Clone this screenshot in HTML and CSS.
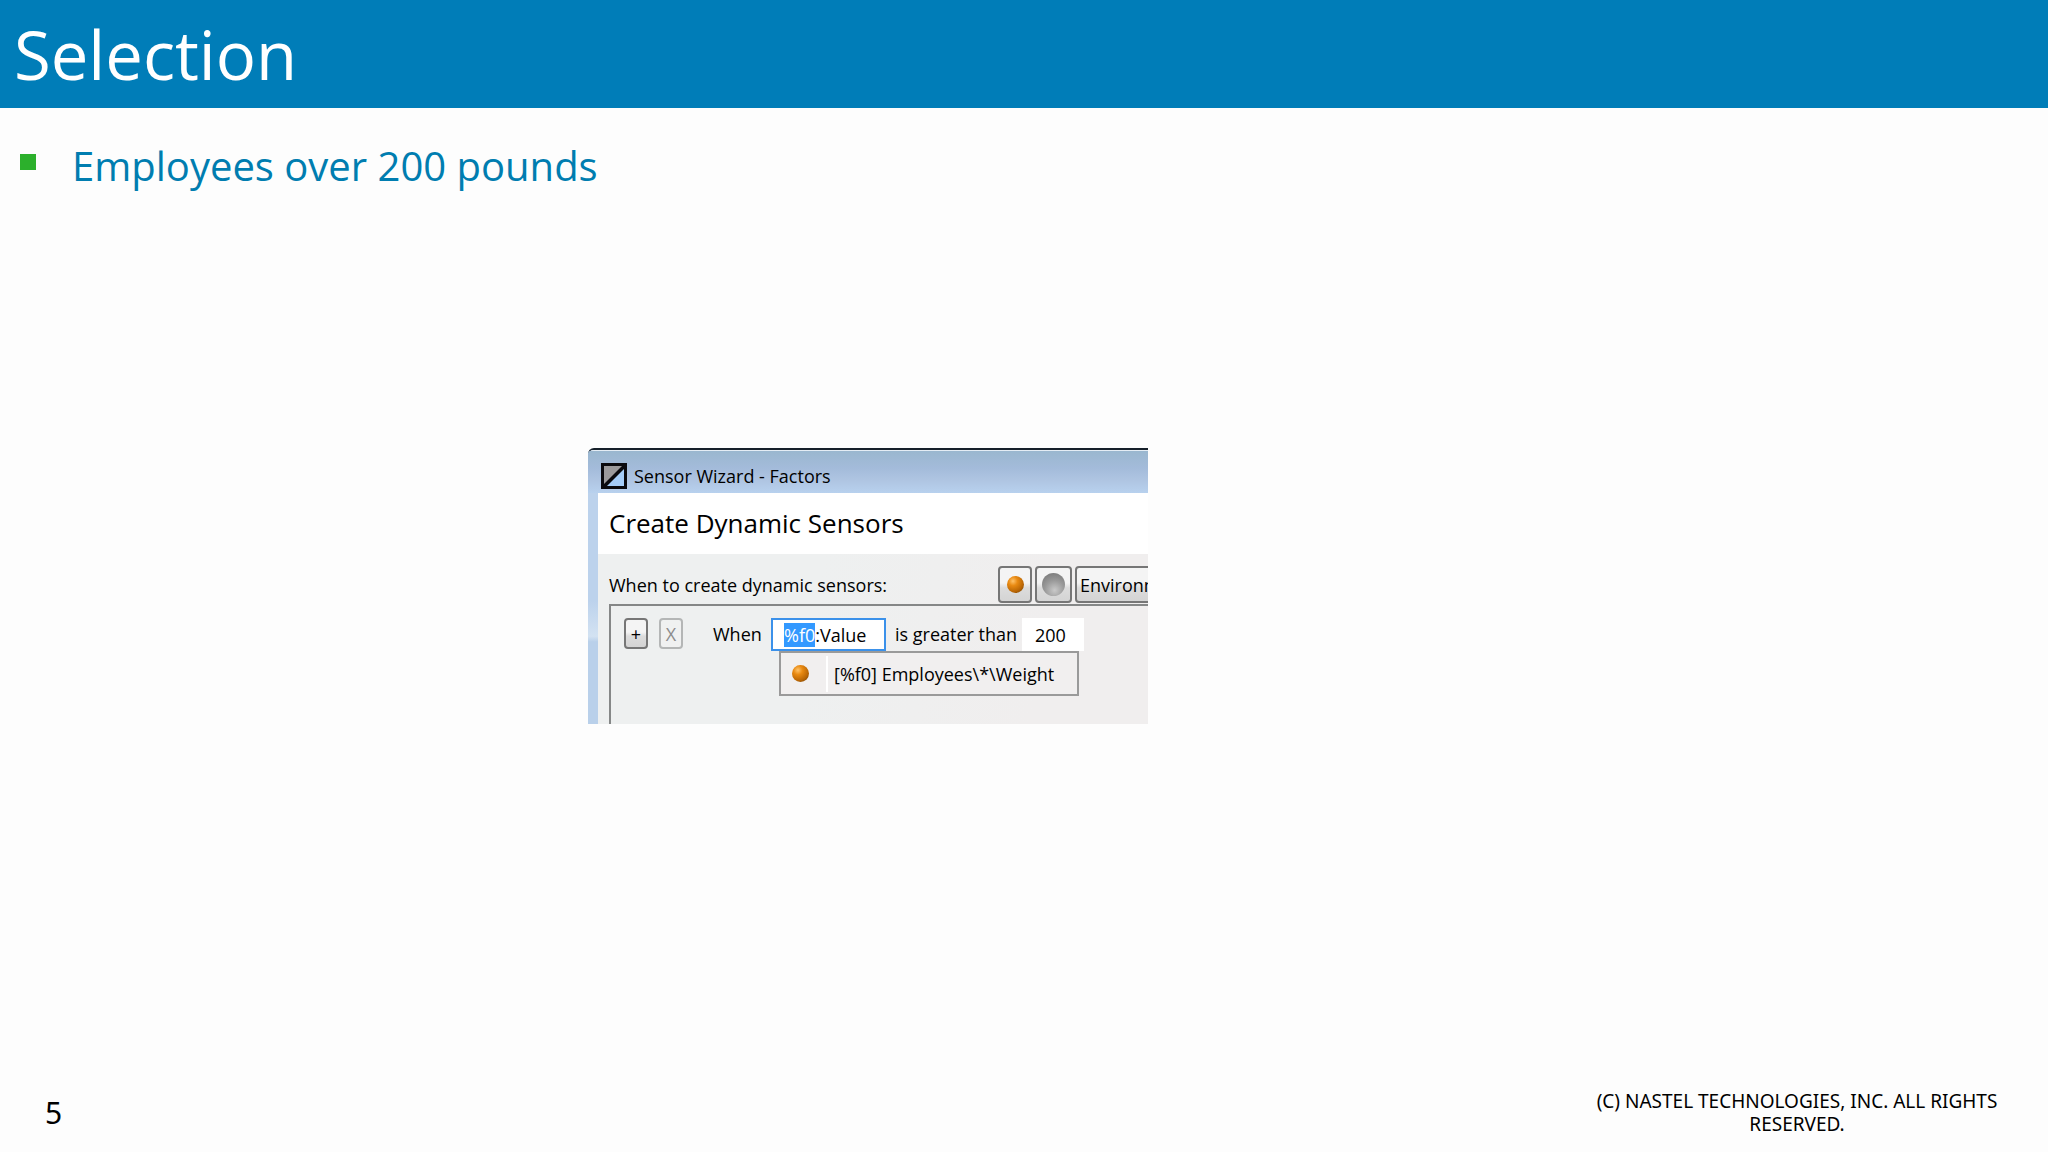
FILE: index.html
```html
<!DOCTYPE html>
<html lang="en">
<head>
    <meta charset="utf-8">
    <title>Selection</title>
    <link rel="stylesheet" href="styles.css">
</head>
<body>
    <header class="slide-header">
        <h1>Selection</h1>
    </header>

    <main class="slide-body">
        <ul class="bullets">
            <li>Employees over 200 pounds</li>
        </ul>

        <div class="wizard">
            <div class="titlebar">
                <svg class="app-icon" width="26" height="26" viewBox="0 0 26 26">
                    <rect width="26" height="26" fill="#0a0a0e"/>
                    <path d="M3 3H21L3 21Z" fill="#9b9a9c"/>
                    <path d="M23 6V23H6Z" fill="#a5cdf8"/>
                </svg>
                <span>Sensor Wizard - Factors</span>
            </div>
            <div class="wizard-content">
                <h2>Create Dynamic Sensors</h2>
                <div class="toolbar">
                    <span class="toolbar-label">When to create dynamic sensors:</span>
                    <button class="tool" type="button" aria-label="Sensor"><span class="ball orange"></span></button>
                    <button class="tool wide" type="button" aria-label="Inactive sensor"><span class="ball gray"></span></button>
                    <button class="tool text" type="button">Environment</button>
                </div>
                <div class="conditions">
                    <button class="small" type="button">+</button>
                    <button class="small" type="button" disabled>X</button>
                    <label class="when" for="factor">When</label>
                    <div class="factor">
                        <input class="factor-input" id="factor" type="text" value="%f0:Value">
                        <div class="suggestions">
                            <button class="suggestion" type="button">
                                <span class="ball orange"></span>
                                <span class="suggestion-text">[%f0] Employees\*\Weight</span>
                            </button>
                        </div>
                    </div>
                    <label class="operator" for="limit">is greater than</label>
                    <input class="limit-input" id="limit" type="text" value="200">
                </div>
            </div>
        </div>
    </main>

    <footer class="slide-footer">
        <span class="page-number">5</span>
        <p class="copyright">(C) NASTEL TECHNOLOGIES, INC. ALL RIGHTS RESERVED.</p>
    </footer>

    <script>
        // the factor part of the expression starts out selected
        const factor = document.getElementById('factor');
        factor.focus();
        factor.setSelectionRange(0, 3);
    </script>
</body>
</html>
```
FILE: styles.css
```css
* {
    box-sizing: border-box;
}

body {
    margin: 0;
    min-height: 100vh;
    display: flex;
    flex-direction: column;
    background: #fdfdfd;
    color: #000;
    font-family: "Noto Sans", "Open Sans", sans-serif;
}

.slide-header {
    height: 108px;
    padding: 0 14px;
    display: flex;
    align-items: center;
    background: #007db8;
}

h1 {
    margin: 0;
    color: #fff;
    font-family: "Open Sans", sans-serif;
    font-size: 67px;
    font-weight: 400;
    line-height: 108px;
}

.slide-body {
    flex: 1;
}

.bullets {
    margin: 0;
    padding: 31px 20px 0;
    list-style: none;
    color: #007db0;
    font-family: "Open Sans", sans-serif;
    font-size: 40px;
    line-height: 54px;
}

.bullets li {
    display: flex;
    gap: 36px;
}

.bullets li::before {
    content: "";
    width: 16px;
    height: 16px;
    margin-top: 15px;
    background: #2cb02c;
}

.wizard {
    width: 560px;
    height: 276px;
    margin: 255px 0 0 588px;
    display: flex;
    flex-direction: column;
    overflow: hidden;
    border-top: 2px solid #16202a;
    border-top-left-radius: 6px;
    background: linear-gradient(#bcd2ec 0%, #bcd2ec 55%, #d3e2f2 68%, #b9d0ea 70%);
    font-family: "Open Sans", sans-serif;
    font-size: 18px;
    line-height: 24px;
}

.titlebar {
    height: 43px;
    padding: 7px 13px 0;
    display: flex;
    align-items: center;
    gap: 7px;
    border-top: 1px solid #e4edf5;
    background: linear-gradient(#9ab7cf, #a3bbda 40%, #afc5e2 70%, #b8d1ee);
}

.wizard-content {
    flex: 1;
    margin-left: 10px;
    display: flex;
    flex-direction: column;
    background: linear-gradient(100deg, #eef0f0 40%, #f0eeee 80%);
}

h2 {
    margin: 0;
    padding: 0 11px;
    background: #fff;
    font-size: 26px;
    font-weight: 400;
    line-height: 61px;
}

.toolbar {
    padding: 12px 0 1px 11px;
    display: flex;
    align-items: center;
    gap: 3px;
    white-space: nowrap;
}

.toolbar-label {
    flex: none;
    width: 386px;
}

button {
    flex: none;
    padding: 0;
    border: 2px solid #767676;
    border-radius: 4px;
    background: linear-gradient(#f4f4f4 45%, #dcdcdc 60%, #d4d4d4);
    color: #000;
    font-family: inherit;
    font-size: 18px;
    line-height: 24px;
}

.tool {
    width: 34px;
    height: 37px;
    display: flex;
    align-items: center;
    justify-content: center;
}

.tool.wide {
    width: 37px;
}

.tool.text {
    width: 120px;
    padding-left: 3px;
    justify-content: flex-start;
}

.ball {
    flex: none;
    border-radius: 50%;
}

.ball.orange {
    width: 17px;
    height: 17px;
    background: radial-gradient(circle at 35% 30%, #ffc36a, #e98a12 28%, #b96605 65%, #5f3708);
}

.ball.gray {
    width: 23px;
    height: 23px;
    background: radial-gradient(circle at 55% 75%, #c9c9c9, #9a9a9a 45%, #707070);
}

.conditions {
    flex: 1;
    margin-left: 11px;
    padding: 12px 0 0 13px;
    display: flex;
    align-items: flex-start;
    border: solid #858787;
    border-width: 2px 0 0 2px;
    line-height: 32px;
    white-space: nowrap;
}

.small {
    width: 24px;
    height: 31px;
    margin-right: 11px;
}

.small:disabled {
    border-color: #b4b6b6;
    background: #f0f1f1;
    color: #8c8c8c;
}

.when {
    width: 58px;
    margin-left: 19px;
}

.factor {
    position: relative;
}

input {
    display: block;
    height: 33px;
    border: 0;
    border-radius: 0;
    outline: 0;
    background: #fff;
    color: #000;
    font-family: inherit;
    font-size: 18px;
}

.factor-input {
    width: 115px;
    padding: 0 11px;
    border: 2px solid #3b91ea;
}

.factor-input::selection {
    background: #3399ff;
    color: #fff;
}

.suggestions {
    position: absolute;
    top: 33px;
    left: 8px;
    width: 300px;
    height: 45px;
    border: 2px solid #9a9a9a;
    background: #f1efef;
}

.suggestion {
    width: 100%;
    height: 100%;
    padding-left: 11px;
    display: flex;
    align-items: center;
    gap: 17px;
    border: 0;
    background: none;
}

.suggestion-text {
    padding-left: 6px;
    border-left: 2px solid #fff;
    line-height: 36px;
}

.operator {
    width: 127px;
    margin-left: 9px;
}

.limit-input {
    width: 62px;
    padding: 0 13px;
}

.slide-footer {
    padding: 0 45px 16px;
    display: flex;
    align-items: center;
    justify-content: space-between;
}

.page-number {
    font-size: 30px;
    line-height: 40px;
}

.copyright {
    width: 412px;
    margin: 0;
    font-size: 19px;
    line-height: 23px;
    text-align: center;
}
```
